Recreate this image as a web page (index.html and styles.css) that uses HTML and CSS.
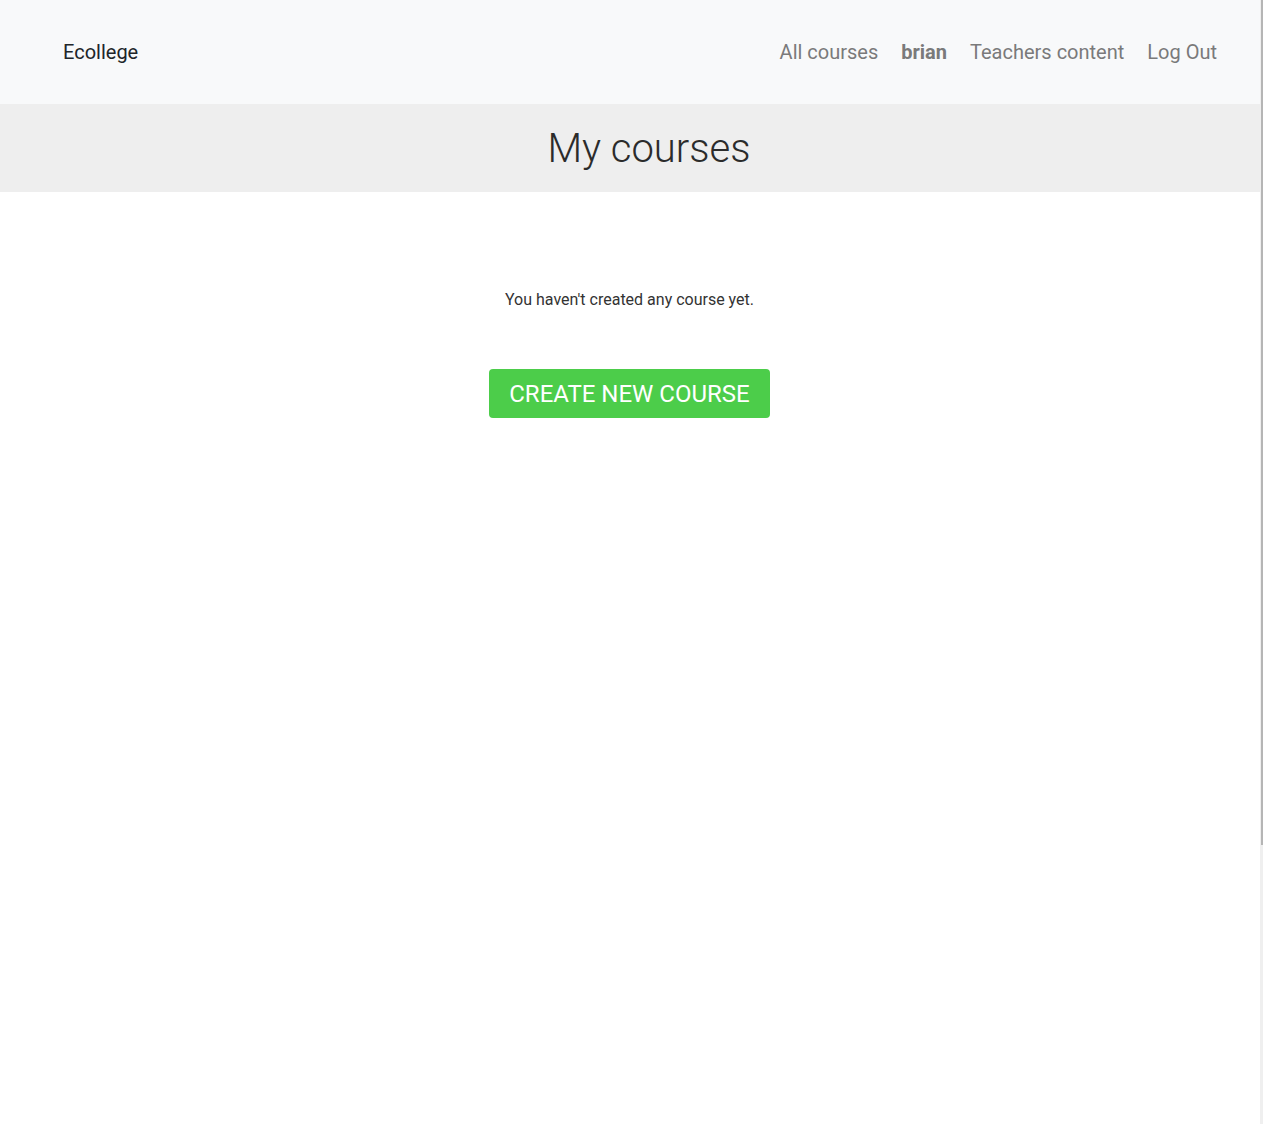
FILE: index.html
```html
<!DOCTYPE html>
<html lang="en">
<head>
<meta charset="utf-8">
<title>My courses</title>
<link rel="stylesheet" href="styles.css">
</head>
<body>
<div class="page">
  <nav class="navbar">
    <a class="brand" href="#">Ecollege</a>
    <ul class="nav-links">
      <li><a href="#">All courses</a></li>
      <li><a href="#" class="user">brian</a></li>
      <li><a href="#">Teachers content</a></li>
      <li><a href="#">Log Out</a></li>
    </ul>
  </nav>
  <header class="jumbo">
    <h1>My courses</h1>
  </header>
  <main class="content">
    <p class="empty">You haven't created any course yet.</p>
    <a class="btn-create" href="#">CREATE NEW COURSE</a>
  </main>
</div>
<div class="scrollbar"><div class="thumb"></div></div>
</body>
</html>
```
FILE: styles.css
```css
html, body {
  margin: 0;
  padding: 0;
  background: #fff;
}
body {
  font-family: Roboto, "Liberation Sans", sans-serif;
  color: #212529;
  height: 1124px;
  overflow: hidden;
}
.page {
  width: 1259px;
}
.navbar {
  width: 1260px;
  height: 104px;
  background: #f8f9fa;
  display: flex;
  align-items: center;
  justify-content: space-between;
  padding: 0 43px 0 63px;
  box-sizing: border-box;
}
.brand {
  font-size: 20px;
  color: #212529;
  text-decoration: none;
}
.nav-links {
  list-style: none;
  display: flex;
  gap: 23px;
  margin: 0;
  padding: 0;
}
.nav-links a {
  font-size: 20px;
  color: #7a7a7a;
  text-decoration: none;
}
.nav-links a.user {
  font-weight: 700;
}
.jumbo {
  width: 1260px;
  height: 88px;
  background: #eeeeee;
  display: flex;
  align-items: center;
  justify-content: center;
  padding-left: 38px;
  box-sizing: border-box;
}
.jumbo h1 {
  margin: 0;
  font-weight: 300;
  font-size: 40px;
  color: #2b2b2b;
}
.content {
  display: flex;
  flex-direction: column;
  align-items: center;
  padding-top: 98px;
}
.empty {
  margin: 0;
  font-size: 16px;
  color: #333;
}
.btn-create {
  margin-top: 60px;
  width: 281px;
  height: 49px;
  box-sizing: border-box;
  display: flex;
  align-items: center;
  justify-content: center;
  background: #4ccd4a;
  color: #fff;
  font-size: 24px;
  border-radius: 4px;
  text-decoration: none;
}
.scrollbar {
  position: fixed;
  top: 0;
  right: 0;
  width: 3px;
  height: 1124px;
  background: #efefef;
}
.scrollbar .thumb {
  height: 845px;
  width: 2px;
  margin-left: 1px;
  background: #b5b5b5;
}
```
